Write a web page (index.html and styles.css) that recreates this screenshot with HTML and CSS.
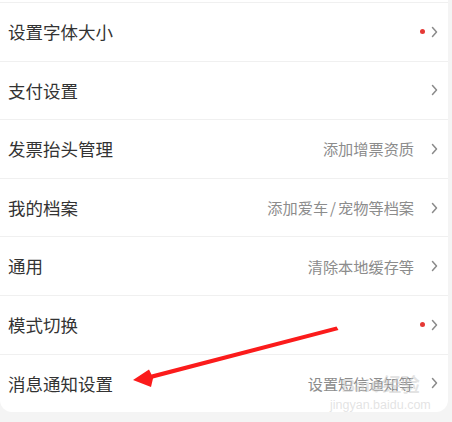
FILE: index.html
```html
<!DOCTYPE html>
<html lang="zh">
<head>
<meta charset="utf-8">
<link rel="stylesheet" href="styles.css">
</head>
<body>
<div class="page">
  <div class="card">
    <div class="row">
      <span class="title">设置字体大小</span>
      <span class="dot"></span>
      <svg class="chev" viewBox="0 0 7 12" width="7" height="12"><polyline points="1.5,1.5 5.5,6 1.5,10.5" /></svg>
    </div>
    <div class="row">
      <span class="title">支付设置</span>
      <svg class="chev" viewBox="0 0 7 12" width="7" height="12"><polyline points="1.5,1.5 5.5,6 1.5,10.5" /></svg>
    </div>
    <div class="row">
      <span class="title">发票抬头管理</span>
      <span class="extra">添加增票资质</span>
      <svg class="chev" viewBox="0 0 7 12" width="7" height="12"><polyline points="1.5,1.5 5.5,6 1.5,10.5" /></svg>
    </div>
    <div class="row">
      <span class="title">我的档案</span>
      <span class="extra">添加爱车<span class="slash">/</span>宠物等档案</span>
      <svg class="chev" viewBox="0 0 7 12" width="7" height="12"><polyline points="1.5,1.5 5.5,6 1.5,10.5" /></svg>
    </div>
    <div class="row">
      <span class="title">通用</span>
      <span class="extra">清除本地缓存等</span>
      <svg class="chev" viewBox="0 0 7 12" width="7" height="12"><polyline points="1.5,1.5 5.5,6 1.5,10.5" /></svg>
    </div>
    <div class="row">
      <span class="title">模式切换</span>
      <span class="dot"></span>
      <svg class="chev" viewBox="0 0 7 12" width="7" height="12"><polyline points="1.5,1.5 5.5,6 1.5,10.5" /></svg>
    </div>
    <div class="row">
      <span class="title">消息通知设置</span>
      <span class="extra">设置短信通知等</span>
      <svg class="chev" viewBox="0 0 7 12" width="7" height="12"><polyline points="1.5,1.5 5.5,6 1.5,10.5" /></svg>
    </div>
  </div>
  <div class="watermark">
    <span class="wm-logo">Bai<span class="paw">❁</span>经验</span>
    <span class="wm-url">jingyan.baidu.com</span>
  </div>
  <svg class="arrow" viewBox="0 0 452 422" width="452" height="422">
    <polygon points="133,380 149,369.5 151.5,374.5 336.5,326.5 338.5,330 153,378.5 151,387" />
  </svg>
</div>
</body>
</html>
```

FILE: styles.css
```css
html, body {
  margin: 0;
  padding: 0;
  background: #f4f4f4;
}
.page {
  position: relative;
  width: 452px;
  height: 422px;
  overflow: hidden;
  background: #f4f4f4;
  font-family: "Noto Sans CJK SC", "Noto Sans", sans-serif;
}
.card {
  width: 448px;
  background: #ffffff;
  padding-top: 2px;
  border-radius: 0 0 12px 12px;
}
.row {
  box-sizing: border-box;
  height: 58.6px;
  border-top: 1px solid #f0f0f0;
  display: flex;
  align-items: center;
  padding: 0 10.5px 0 8px;
}
.title {
  flex: 1;
  font-size: 17.5px;
  color: #333333;
  line-height: 1;
}
.extra {
  font-size: 15.2px;
  color: #8c8c8c;
  line-height: 1;
  margin-right: 16.5px;
}
.slash {
  margin: 0 2px;
}
.dot {
  width: 5px;
  height: 5px;
  border-radius: 50%;
  background: #e53935;
  margin-right: 5.5px;
}
.chev {
  display: block;
}
.chev polyline {
  fill: none;
  stroke: #8a8a8a;
  stroke-width: 1.5;
  stroke-linecap: round;
  stroke-linejoin: round;
}
.arrow {
  position: absolute;
  left: 0;
  top: 0;
}
.arrow polygon {
  fill: #fb1b1b;
}
.watermark {
  position: absolute;
  left: 330px;
  top: 376px;
  display: flex;
  flex-direction: column;
  align-items: center;
  color: rgba(200, 200, 200, 0.5);
  font-family: "Liberation Sans", "Noto Sans CJK SC", sans-serif;
  line-height: 1;
}
.wm-logo {
  font-size: 19px;
  font-weight: bold;
  letter-spacing: -0.5px;
}
.paw {
  font-size: 15px;
}
.wm-url {
  font-size: 12.5px;
  margin-top: 4px;
}
```
